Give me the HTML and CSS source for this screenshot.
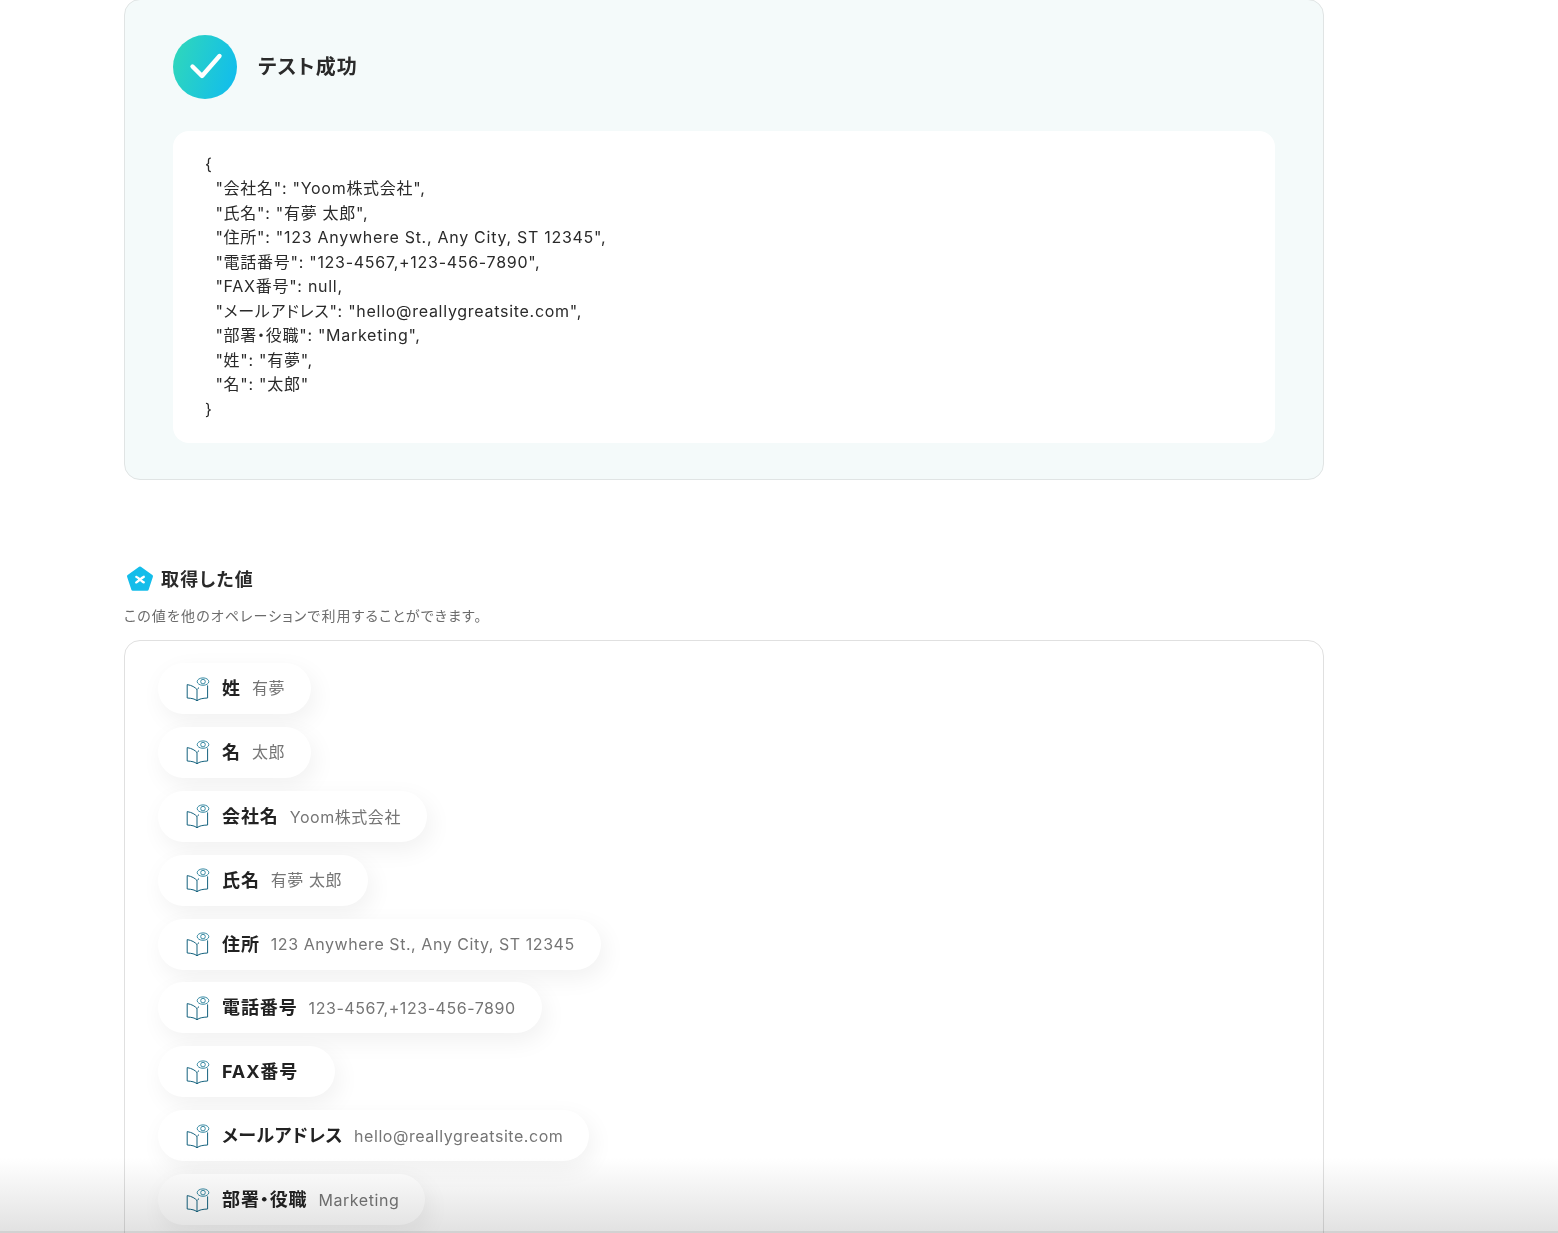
FILE: index.html
```html
<!DOCTYPE html>
<html lang="ja">
<head>
<meta charset="utf-8">
<title>テスト成功</title>
<link rel="stylesheet" href="styles.css">
</head>
<body>
<svg class="defs" width="0" height="0" aria-hidden="true">
  <defs>
    <linearGradient id="okgrad" x1="0" y1="0.35" x2="1" y2="0.65">
      <stop offset="0" stop-color="#2ed6bd"/>
      <stop offset="1" stop-color="#12bdec"/>
    </linearGradient>
    <symbol id="book" viewBox="0 0 24 24">
      <path d="M11 12.6C9 10.2 6 8.4 1.2 7.6V21C5.6 21.2 9 22 11 23.6C13 22 16.6 21.2 21.6 21V8.4M11 12.6V24M11 12.6C11.6 11.8 12.2 11.2 13 10.6M10 23.2L11 24.2L12 23.2" fill="none" stroke="#14627e" stroke-width="1"/>
      <ellipse cx="17" cy="4.6" rx="5.8" ry="3.7" fill="none" stroke="#3a8ba4" stroke-width="1"/>
      <circle cx="17" cy="4.6" r="2.3" fill="none" stroke="#3a8ba4" stroke-width="1"/>
    </symbol>
  </defs>
</svg>
<main class="page">
  <section class="result">
    <div class="result-head">
      <svg class="ok" viewBox="0 0 64 64" width="64" height="64" aria-hidden="true">
        <circle cx="32" cy="32" r="32" fill="url(#okgrad)"/>
        <path d="M19.5 31.5L29 41L46.5 21" fill="none" stroke="#fff" stroke-width="4.4" stroke-linecap="round" stroke-linejoin="round"/>
      </svg>
      <h2 class="result-title">テスト成功</h2>
    </div>
    <pre class="json">{
  "会社名": "Yoom株式会社",
  "氏名": "有夢 太郎",
  "住所": "123 Anywhere St., Any City, ST 12345",
  "電話番号": "123-4567,+123-456-7890",
  "FAX番号": null,
  "メールアドレス": "hello@reallygreatsite.com",
  "部署・役職": "Marketing",
  "姓": "有夢",
  "名": "太郎"
}</pre>
  </section>

  <section class="values">
    <div class="values-head">
      <svg class="penta" viewBox="0 0 28 28" width="28" height="28" aria-hidden="true">
        <path d="M14 3L25.5 11.2L21.2 24.2H6.8L2.5 11.2Z" fill="#14bdea" stroke="#14bdea" stroke-width="3" stroke-linejoin="round"/>
        <path d="M10.3 11.8C12.5 12.2 15.5 16.6 17.8 17.4M17.8 11.8C15.5 12.6 12.5 16.2 10.2 17.4" fill="none" stroke="#fff" stroke-width="2.3" stroke-linecap="round"/>
      </svg>
      <h3 class="values-title">取得した値</h3>
    </div>
    <p class="values-sub">この値を他のオペレーションで利用することができます。</p>
    <div class="values-card">
      <div class="chip"><svg class="book"><use href="#book"/></svg><b class="key">姓</b><span class="val ja">有夢</span></div>
      <div class="chip"><svg class="book"><use href="#book"/></svg><b class="key">名</b><span class="val ja">太郎</span></div>
      <div class="chip"><svg class="book"><use href="#book"/></svg><b class="key">会社名</b><span class="val">Yoom株式会社</span></div>
      <div class="chip"><svg class="book"><use href="#book"/></svg><b class="key">氏名</b><span class="val ja">有夢 太郎</span></div>
      <div class="chip"><svg class="book"><use href="#book"/></svg><b class="key">住所</b><span class="val">123 Anywhere St., Any City, ST 12345</span></div>
      <div class="chip"><svg class="book"><use href="#book"/></svg><b class="key">電話番号</b><span class="val">123-4567,+123-456-7890</span></div>
      <div class="chip"><svg class="book"><use href="#book"/></svg><b class="key">FAX番号</b><span class="val"></span></div>
      <div class="chip"><svg class="book"><use href="#book"/></svg><b class="key kana">メールアドレス</b><span class="val">hello@reallygreatsite.com</span></div>
      <div class="chip"><svg class="book"><use href="#book"/></svg><b class="key">部署・役職</b><span class="val">Marketing</span></div>
    </div>
  </section>
</main>
<div class="fade" aria-hidden="true"></div>
</body>
</html>
```
FILE: styles.css
```css
* { box-sizing: border-box; }
html, body { margin: 0; height: 1233px; overflow: hidden; background: #fff; }
body {
  font-family: Inter, "Noto Sans CJK JP", sans-serif;
  font-feature-settings: "palt";
  color: #2a2a2a;
  position: relative;
}
.defs { position: absolute; }
.page { width: 1200px; height: 1234px; overflow: hidden; margin: -1px 0 0 124px; }

.result {
  height: 481px;
  padding: 35px 48px 36px;
  background: #f4fafa;
  border: 1px solid #e0e4e4;
  border-radius: 16px;
}
.result-head { display: flex; align-items: center; gap: 21px; }
.ok { flex: none; }
.result-title { margin: 0 0 4px; font-size: 20px; font-weight: 700; letter-spacing: .06em; }
.json {
  margin: 32px 0 0;
  height: 312px;
  padding: 20.6px 32px;
  background: #fff;
  border-radius: 16px;
  font: inherit;
  font-size: 16px;
  line-height: 24.5px;
  letter-spacing: .72px;
  color: #2a2a2a;
  white-space: pre;
}

.values { margin-top: 84px; }
.values-head { display: flex; align-items: center; gap: 7px; padding-left: 2px; height: 30px; }
.penta { flex: none; }
.values-title { margin: 0 0 2px; font-size: 18px; font-weight: 700; letter-spacing: .065em; }
.values-sub { margin: 11px 0 0; font-size: 14px; line-height: 21px; color: #6b6b6b; letter-spacing: .08em; }
.values-card {
  margin-top: 14px;
  height: 700px;
  padding: 22px 33px;
  display: flex;
  flex-direction: column;
  align-items: flex-start;
  gap: 12.9px;
  border: 1px solid #e0e0e0;
  border-radius: 16px;
}
.chip {
  display: flex;
  align-items: center;
  height: 51px;
  padding: 0 26px 0 28px;
  border-radius: 26px;
  background: #fff;
  box-shadow: 4px 8px 24px rgba(0, 0, 0, .06);
}
.book { width: 24px; height: 24px; flex: none; margin-right: 12px; }
.key { margin-bottom: 3px; font-size: 18px; font-weight: 700; letter-spacing: .05em; color: #222; white-space: nowrap; }
.key.kana { letter-spacing: .03em; }
.val { margin-left: 11px; font-size: 16px; letter-spacing: .55px; color: #757575; white-space: nowrap; }
.val.ja { margin-bottom: 3px; }

.fade {
  position: absolute;
  left: 0;
  right: 0;
  bottom: 0;
  height: 75px;
  background: linear-gradient(to bottom, #fff, #e2e2e2);
  mix-blend-mode: multiply;
  border-bottom: 2px solid #d2d2d2;
  pointer-events: none;
}
```
